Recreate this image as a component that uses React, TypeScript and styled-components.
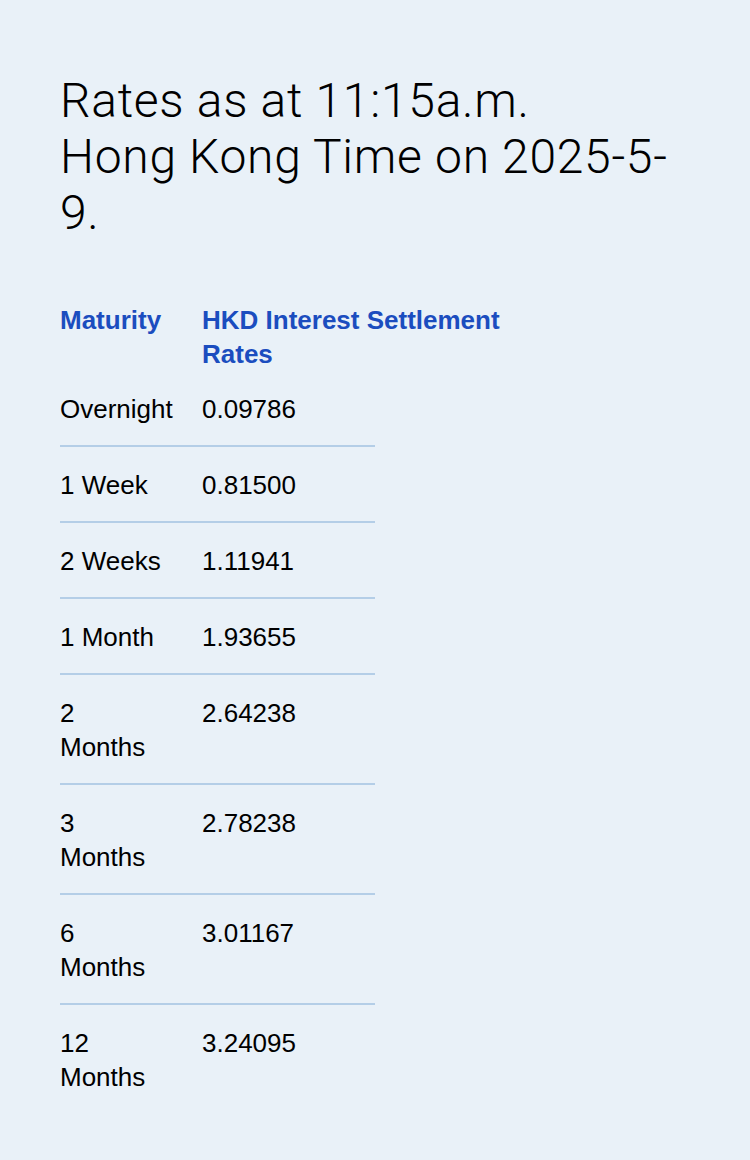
import React from "react";
import styled, { createGlobalStyle } from "styled-components";

const GlobalStyle = createGlobalStyle`
  html, body {
    margin: 0;
    padding: 0;
    background: #e9f1f8;
  }
  body {
    font-family: "Liberation Sans", Arial, Helvetica, sans-serif;
    color: #000;
  }
`;

const Page = styled.main`
  min-height: 1160px;
  box-sizing: border-box;
  padding: 73px 60px 40px 60px;
  background: #e9f1f8;
`;

const Title = styled.h1`
  margin: 0 0 62px 0;
  font-family: Roboto, "Liberation Sans", Arial, sans-serif;
  font-size: 48px;
  line-height: 56px;
  font-weight: 300;
  letter-spacing: 0.7px;
  color: #000;
`;

const Table = styled.div`
  display: flex;
  flex-direction: column;
  width: 315px;
`;

const HeaderRow = styled.div`
  display: grid;
  grid-template-columns: 142px 310px;
`;

const HeaderCell = styled.div`
  font-size: 26px;
  line-height: 34px;
  font-weight: 700;
  color: #1b4dbf;
`;

const Row = styled.div<{ $last?: boolean }>`
  display: grid;
  grid-template-columns: 142px 173px;
  padding: 21px 0 19px 0;
  border-bottom: 2px solid ${(p) => (p.$last ? "transparent" : "#b4cee7")};
`;

const MaturityCell = styled.div`
  font-size: 26px;
  line-height: 34px;
  padding-right: 38px;
  white-space: normal;
`;

const RateCell = styled.div`
  font-size: 26px;
  line-height: 34px;
`;

const rows: [string, string][] = [
  ["Overnight", "0.09786"],
  ["1 Week", "0.81500"],
  ["2 Weeks", "1.11941"],
  ["1 Month", "1.93655"],
  ["2 Months", "2.64238"],
  ["3 Months", "2.78238"],
  ["6 Months", "3.01167"],
  ["12 Months", "3.24095"],
];

export default function App() {
  return (
    <>
      <GlobalStyle />
      <Page>
        <Title>
          Rates as at 11:15a.m.
          <br />
          Hong Kong Time on 2025-5-<wbr />9.
        </Title>
        <Table>
          <HeaderRow>
            <HeaderCell>Maturity</HeaderCell>
            <HeaderCell>HKD Interest Settlement Rates</HeaderCell>
          </HeaderRow>
          {rows.map(([m, r], i) => (
            <Row key={m} $last={i === rows.length - 1}>
              <MaturityCell>{m}</MaturityCell>
              <RateCell>{r}</RateCell>
            </Row>
          ))}
        </Table>
      </Page>
    </>
  );
}
